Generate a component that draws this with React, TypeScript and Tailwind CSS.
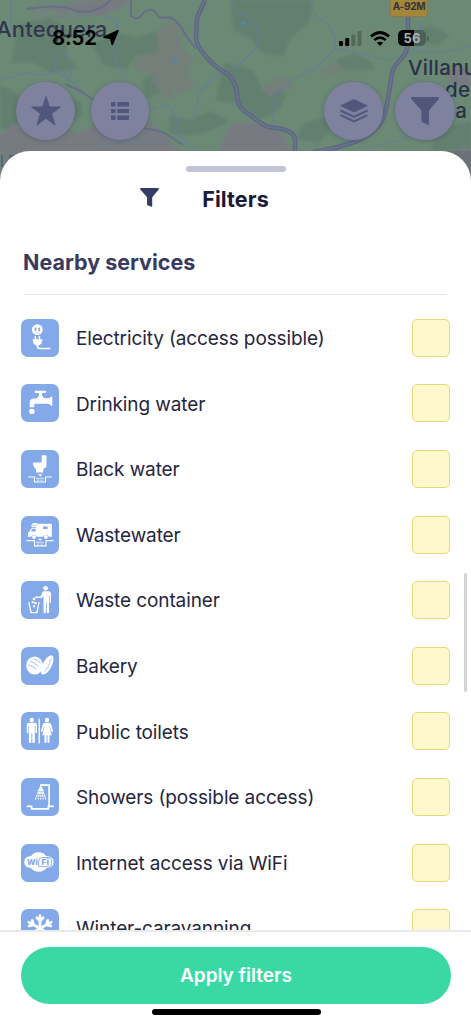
import type { ReactNode } from "react";

const FONT = "font-[Inter,'Liberation_Sans',sans-serif]";

interface Service {
  label: string;
  icon: ReactNode;
}

const services: Service[] = [
  { label: "Electricity (access possible)", icon: <ElectricityIcon /> },
  { label: "Drinking water", icon: <TapIcon /> },
  { label: "Black water", icon: <BlackWaterIcon /> },
  { label: "Wastewater", icon: <WastewaterIcon /> },
  { label: "Waste container", icon: <WasteIcon /> },
  { label: "Bakery", icon: <BakeryIcon /> },
  { label: "Public toilets", icon: <ToiletsIcon /> },
  { label: "Showers (possible access)", icon: <ShowerIcon /> },
  { label: "Internet access via WiFi", icon: <WifiLogoIcon /> },
  { label: "Winter-caravanning", icon: <SnowIcon /> },
];

function Glyph({ children }: { children: ReactNode }) {
  return (
    <svg viewBox="0 0 38 38" className="h-full w-full" fill="#fff">
      {children}
    </svg>
  );
}

function ElectricityIcon() {
  return (
    <Glyph>
      <circle cx="16.3" cy="10.6" r="5.4" />
      <g fill="#84a9e8">
        <rect x="13.6" y="8.6" width="1.7" height="3.6" rx=".8" />
        <rect x="17.3" y="8.6" width="1.7" height="3.6" rx=".8" />
        <circle cx="16.3" cy="13.9" r=".7" />
      </g>
      <path d="M13.6 17h1.5v3.2h2.6V17h1.5v3.2h2.2v1.6h-.7v2.4l-2.6 2.4h-3.2l-2.6-2.4v-2.4h-.7v-1.6h2z" />
      <path d="M16.5 26v1.6q0 2 2 2h11" fill="none" stroke="#fff" strokeWidth="1.5" />
    </Glyph>
  );
}

function TapIcon() {
  return (
    <Glyph>
      <path d="M14.5 6.8h9.8q.8 0 .8 1.1t-.8 1.1H21v2.6l2.4 2.6h3.4q2.4-.3 3.5-1.8h1v9.3h-1q-1.1-1.7-3.5-2H14.6q-1.4 0-1.4 1.4v2.2H8.7v-4.4q0-4.3 4.3-4.5h2.7l2.3-2.6V9h-3.5q-.8 0-.8-1.1t.8-1.1z" />
      <circle cx="10.9" cy="27.4" r="2.7" />
    </Glyph>
  );
}

function BlackWaterIcon() {
  return (
    <Glyph>
      <path d="M20.7 5.7q0-.5.5-.5H25q.5 0 .5.5V17q-1.700 1.200-3.300 2v3.600H15v-3q-2.400-1.700-3-5.500v-1.500h8.700z" />
      <path d="M17 24.2h4.500l-2.200 2.300z" />
      <path d="M7.3 27h6.200v5h11v-5h6.200" fill="none" stroke="#fff" strokeWidth="1.1" />
      <path d="M15 28.4q1.200-.6 2.200 0t2.200 0 2.200 0 1.500 0M16 30.2h2m1.500 0h2" fill="none" stroke="#fff" strokeWidth=".8" />
    </Glyph>
  );
}

function WastewaterIcon() {
  return (
    <Glyph>
      <path d="M10.3 9.5q.2-2.500 2.500-2.500h3v.7h14q1.100 0 1.100 1v12.100h-3.300a2.800 2.800 0 0 0-5.400 0h-6.500a2.800 2.800 0 0 0-5.400 0H6.900v-3.400q0-1.500 1.500-2l2.600-3.700h4.200V11h-3.900q-1 0-1-1.500z" />
      <circle cx="13" cy="21" r="1.9" />
      <circle cx="24.9" cy="21" r="1.9" />
      <path d="M11.7 12.8h2.900v2.800H9.900zM22 10.500h4.600v2.400H22z" fill="#84a9e8" />
      <path d="M10.7 9.3h6" stroke="#84a9e8" strokeWidth=".6" />
      <path d="M16.8 22.700h4.500L19 25z" />
      <path d="M5.5 24.6h8v5.300H25v-5.300h7.500" fill="none" stroke="#fff" strokeWidth="1.1" />
      <path d="M15 26.3q1.200-.6 2.200 0t2.200 0 2.200 0 1.500 0M16 28h2m1.500 0h2" fill="none" stroke="#fff" strokeWidth=".8" />
    </Glyph>
  );
}

function WasteIcon() {
  return (
    <Glyph>
      <circle cx="24.6" cy="7.3" r="2.300" />
      <path d="M22.5 10.2h5q2.500 0 2.500 2.600v8.300q0 .8-.7.800t-.7-.8v-7h-.5V31q0 1.200-1.200 1.200T25.700 31v-9.600h-.8V31q0 1.200-1.200 1.200T22.500 31V15.300l-2 1.800h-5.700q-.9 0-.9-.8t.9-.8h4.900l1.700-4.300q.4-1 1.100-1z" />
      <path d="M7.8 21.200 10 31.600h6l2-10.400" fill="none" stroke="#fff" strokeWidth="1.3" />
      <rect x="11.8" y="16.800" width="2.500" height="2.200" transform="rotate(15 13 18)" />
      <rect x="10.6" y="20.200" width="2" height="2.300" transform="rotate(-20 11 21)" />
      <rect x="13.6" y="20.700" width="2.200" height="2.400" transform="rotate(20 14 21)" />
      <rect x="12" y="24.200" width="2" height="2" />
    </Glyph>
  );
}

function BakeryIcon() {
  return (
    <Glyph>
      <ellipse cx="13.6" cy="18.6" rx="8.4" ry="9" />
      <path d="M20.300 26.500c-.6-4 .6-9 3.200-12.800 2.100-3.100 5.700-5.700 7.500-5.300 2 .5 1.900 4.700.5 8.600-1.400 4.100-4.200 8.500-7.500 10-1.800.8-3.300.6-3.700-.5z" />
      <path
        d="M9.2 14.500q4.500.4 8 4.700M7.600 18q4.200.6 7.400 4.400M12.700 12q4 .8 6.600 4M30.400 12.200q-.7 2-2.400 2.300M29.200 15.700q-.7 2-2.400 2.300M27.400 19.300q-.7 2-2.400 2.300M25.300 22.500q-.7 1.500-2 1.800"
        fill="none"
        stroke="#84a9e8"
        strokeWidth=".8"
      />
    </Glyph>
  );
}

function ToiletsIcon() {
  return (
    <Glyph>
      <circle cx="10.8" cy="7.9" r="2.200" />
      <path d="M8 10.800h5.600q2.400 0 2.400 2.500v7q0 .9-.8.900t-.8-.9v-6.400h-.6v16q0 1.200-1.200 1.200t-1.300-1.200v-8.700h-.9v8.700q0 1.200-1.200 1.200T7.900 29.900v-16h-.6v6.400q0 .9-.8.900t-.8-.9v-7q0-2.500 2.300-2.500z" />
      <rect x="17.600" y="6.600" width="1.300" height="24.800" />
      <circle cx="26" cy="7.900" r="2.200" />
      <path d="M24 10.800h4q1.700 0 2.200 1.700l1.800 6.300q.2.900-.5 1.100t-1-.6l-1.600-5.100h-.5l2.500 9h-2.400v6.900q0 1-1 1t-1-1v-6.900h-1v6.900q0 1-1 1t-1-1v-6.900h-2.400l2.500-9h-.5l-1.600 5.100q-.3.800-1 .6t-.5-1.100l1.800-6.300q.5-1.700 2.200-1.700z" />
    </Glyph>
  );
}

function ShowerIcon() {
  return (
    <Glyph>
      <path d="M5.800 28.300h4.800v2.600h16.800v-2.600h5.300" fill="none" stroke="#fff" strokeWidth="1.700" />
      <path d="M28.100 29V7.100h-8.300v3" fill="none" stroke="#fff" strokeWidth="1.600" />
      <path d="M18.600 9.200h2.400l2 3.800h-6.400z" />
      <path
        d="m17.500 13.500-3.200 8M18.700 13.500l-1.600 8M19.800 13.500v8.200M20.900 13.500l1.600 8M22.100 13.500l2.800 8"
        stroke="#fff"
        strokeWidth="1.100"
        strokeDasharray="2.600 .6"
      />
    </Glyph>
  );
}

function WifiLogoIcon() {
  return (
    <Glyph>
      <path d="M10 12.200c1.700-2.700 4.200-4 7.600-4s6 1.300 7.700 4c4.400 0 7.400 2 7.400 5.900s-3 5.900-7.400 5.900c-1.700 2.500-4.200 3.700-7.600 3.700S11.700 26.500 10 24c-4 0-6.700-2-6.700-5.900s2.700-5.900 6.700-5.900z" />
      <path d="M21 13.500h6.700q2.900 0 2.900 2.900v3.300q0 2.900-2.900 2.900h-10V17q0-3.500 3.300-3.500z" fill="none" stroke="#84a9e8" strokeWidth=".9" />
      <g fill="#84a9e8" className="font-['Inter'] text-[8px] font-extrabold">
        <text x="5.900" y="20.800" textLength="10.800" lengthAdjust="spacingAndGlyphs">
          Wi
        </text>
        <text x="20.300" y="20.800" textLength="7.800" lengthAdjust="spacingAndGlyphs">
          Fi
        </text>
      </g>
    </Glyph>
  );
}

function SnowIcon() {
  const arms = [0, 60, 120, 180, 240, 300];
  return (
    <Glyph>
      {arms.map((deg) => (
        <path
          key={deg}
          d="M19 19.500V6.700M15.800 8.800 19 12l3.200-3.200"
          transform={`rotate(${deg} 19 19.500)`}
          fill="none"
          stroke="#fff"
          strokeWidth="2.700"
          strokeLinecap="round"
        />
      ))}
    </Glyph>
  );
}

function FunnelIcon({ className }: { className?: string }) {
  return (
    <svg viewBox="0 0 28 28" className={className} fill="currentColor">
      <path d="M.8 0h26.400q1.200 1 .3 2.200L18 13.500V27q-.2 1-1.300.7l-5.500-2.400q-.8-.5-.8-1.400V13.500L.5 2.200Q-.4 1 .8 0z" />
    </svg>
  );
}

const HIGHWAY_WEST = "M205 0l-8 18-1 20q0 8 14 23 8 8 16 12 8 4 11 20 0 12 6 17l18 13q6 5 16 5 15 2 18 10v40";
const HIGHWAY_EAST = "M408 16v25q0 12-8 19-9 9-9 20-3 20-6 34-5 15-22 24-14 8-50 14";

function MapBackground() {
  return (
    <svg viewBox="0 0 471 200" className="absolute top-0 left-0 h-[200px] w-[471px]" fill="none">
      <rect width="471" height="200" fill="#6c8976" />
      {/* Terrain */}
      <g className="blur-[1.5px]">
        <g fill="#627f6f">
          <path d="M18 25l30-8 24 14-7 22 12 15-25 5-22-12-18 2zM92 45l24-12 20 5 18-6 13 12-14 10-20 3-6 12-22-3zM231 0h82l-4 22-18 15-8 19-19-2-15-17-16-7zM225 62l28 9 9 18 25 4-8 17-19 9-25-16-19-3zM337 60l17-6 14 6 8 9-35 2zM142 80l15-8 8 8-4 13-14 4zM170 116l22 4 18-9 18 10-16 9-25 6-18-3zM440 128l31-6v29h-40zM305 123l18-5 10 9-14 16-23-4zM0 85l16 8 9 21-15 17-10-4zM66 98l15 5 1 14-14 4zM400 35l30-9 20 9-12 10-24-4z" />
        </g>
        <path
          d="M157 30l12-8 10 3 4 25 10 7-5 15 6 12-14 11-14-14-18-8-14-5 4-14 20-1zM156 75l13 4 6 20-12-3-12-16zM265 85l14-8 10 4 7 6-15 3-11 7-8-7zM318 70l14-6 16 4-16 6z"
          fill="#747f7a"
        />
        <path
          d="M26 8L96 0h37l-28 15-51 3zM28 140l20-12 28 4 26-8 46-3 17 14 12 14 22 8v45H0v-55zM0 134l14-10 18 8-8 20H0zM231 124l26-2 27 12 8 20h-76zM443 71l17-4 11 4v16l-19-2zM451 155l12-8 8 3v9h-20z"
          fill="#777b81"
        />
        <path d="M29 12l13-4 23 5 12-4-1 8-20-3-16 7z" fill="#71867a" />
      </g>
      {/* Rivers */}
      <g stroke="#647f93" strokeWidth="1.200" strokeLinejoin="round">
        <path d="M11 0v30M0 79c18 0 20-9 35-5 18 5 12-5 25-2l12 10 18 16M58 51l-4 17 12 10M65 52l7 15-3 14M105 15l12 7-3 33 10 23M231 0l8 14q20 6 20 20l-1 12-18 18-25 13-16 16-5 25M309 0l8 17q14 6 18 22v10l-18 18-26 13-15 15-4 28M421 20l-3 30M150 110l18-5 11 15-5 10 20 20M102 134v11l35-4h24" />
        <path d="M335 49l24 4 28 7 27-9 30 2 27-8M370 148l30-8 28-24 10-22" />
      </g>
      <circle cx="175" cy="60" r="2.500" fill="#5b82a6" />
      <circle cx="243" cy="23" r="2.500" fill="#5b82a6" />
      {/* Roads */}
      <g stroke="#666f88" strokeWidth="2" strokeLinejoin="round">
        <path d="M26 9q35-6 50 2 20 4 35-11M131 0v15q6 8 12-2 7-6 13-1 1 8 12 5 10 2 18 19l10 13M65 84l17 8 14 10 32 23 35 7 20 13" />
      </g>
      <g stroke="#5c6680" strokeWidth="4.500" strokeLinejoin="round">
        <path d={HIGHWAY_WEST} />
        <path d={HIGHWAY_EAST} />
      </g>
      <g stroke="#69728d" strokeWidth="2.200" strokeLinejoin="round">
        <path d={HIGHWAY_WEST} />
        <path d={HIGHWAY_EAST} />
      </g>
      <path d="M2 155v12M9 156h9M13 156v11" stroke="#42666d" strokeWidth="1.500" />
      <path d="M447 151h24v49h-24z" fill="#6c7079" />
    </svg>
  );
}

function MapButton({ children, className }: { children: ReactNode; className: string }) {
  return (
    <button
      className={`flex h-[58px] shrink-0 items-center justify-center rounded-full bg-[#7e829e] text-[#51567b] shadow-[0_1px_5px_rgba(50,55,80,0.35)] ${className}`}
    >
      {children}
    </button>
  );
}

function StatusBar() {
  return (
    <div className="relative flex h-[76px] items-center pl-[52px] text-black">
      <span className="text-[20px] leading-none font-bold tracking-[-0.1px]">8:52</span>
      <svg viewBox="0 0 16 16" className="ml-1.5 size-4" fill="currentColor">
        <path
          d="M15 .8 9.300 14.500 7.700 8.500 1 7.200z"
          stroke="currentColor"
          strokeWidth="1.600"
          strokeLinejoin="round"
        />
      </svg>
      <div className="ml-auto flex items-center pr-[42px]">
        <svg viewBox="0 0 23 15" className="h-[15px] w-[23px]" fill="currentColor">
          <rect y="10" width="4" height="5" rx="1" />
          <rect x="6.200" y="7" width="4" height="8" rx="1" />
          <g opacity=".22">
            <rect x="12.400" y="3.500" width="4" height="11.500" rx="1" />
            <rect x="18.600" width="4" height="15" rx="1" />
          </g>
        </svg>
        <svg viewBox="0 0 20 15" className="ml-2 h-[15px] w-5" fill="none" stroke="currentColor" strokeWidth="2.700">
          <path d="M1 5.500q9-8 18 0M4.300 9q5.700-4.600 11.400 0" />
          <path d="m10 15-3.200-3.200q3.200-2.300 6.400 0z" fill="currentColor" stroke="none" />
        </svg>
        <div className="ml-2 flex h-4 w-7 items-center justify-center rounded-[5px] bg-[linear-gradient(90deg,#050807_56%,#4c5f58_56%)] text-[13px] leading-none font-bold text-[#a9b2b3]">
          56
        </div>
        <div className="ml-px h-[5px] w-[2px] rounded-r-full bg-[#4c5f58]" />
      </div>
    </div>
  );
}

export default function App() {
  return (
    <div className={`relative flex h-[1024px] w-[471px] flex-col overflow-hidden bg-white ${FONT}`}>
      <MapBackground />

      {/* Map labels */}
      <span className="absolute top-[16px] -left-1 text-[22px] leading-[26px] font-medium tracking-[0.2px] text-[#30374d]">
        Antequera
      </span>
      <span className="absolute top-0 left-[390px] flex h-[17px] w-[38px] items-center justify-center rounded-b-[3px] border border-t-0 border-[#8a7a4b] bg-[#a38639] pb-[3px] text-[10px] font-bold tracking-[-0.3px] text-[#303340]">
        A-92M
      </span>
      <div className="absolute top-[57px] left-[408px] w-[90px] text-[20.500px] leading-[21.500px] font-medium tracking-[0.3px] text-[#2b3148]">
        <p>Villanu</p>
        <p className="pl-[37px]">del</p>
        <p className="pl-[36px]">sa</p>
      </div>

      <div className="relative h-[151px] shrink-0">
        <StatusBar />
        <div className="flex px-4 pt-[6px]">
          <MapButton className="w-[59px]">
            <svg viewBox="0 0 30 30" className="size-[30px]" fill="currentColor">
              <path d="M15 .5 18.500 10.900 29.500 11 20.700 17.600 24 29 15 22.300 6 29 9.300 17.600.5 11l11-.1z" stroke="currentColor" strokeLinejoin="round" strokeWidth=".8" />
            </svg>
          </MapButton>
          <MapButton className="ml-4 w-[58px]">
            <svg viewBox="0 0 18 18" className="size-[18px]" fill="currentColor">
              <path d="M1 0h2.500q1 0 1 1v3.500H1q-1 0-1-1V1q0-1 1-1zM6.300 0H17q1 0 1 1v2.500q0 1-1 1H6.300zM0 6.900h4.500v4.200H0zM6.300 6.900H18v4.200H6.300zM0 13.500h4.500V18H1q-1 0-1-1zM6.300 13.500H18V17q0 1-1 1H6.300z" />
            </svg>
          </MapButton>
          <MapButton className="ml-auto w-[59px]">
            <svg viewBox="0 0 28 24" className="h-6 w-7" fill="currentColor">
              <path d="M14 0 28 6.700 14 13.500 0 6.700z" />
              <path d="m.5 11.500 13.500 6.300 13.500-6.300M.5 16.200 14 22.500l13.500-6.300" fill="none" stroke="currentColor" strokeWidth="2" />
            </svg>
          </MapButton>
          <MapButton className="ml-3 w-[60px]">
            <FunnelIcon className="size-7" />
          </MapButton>
        </div>
      </div>

      {/* Bottom sheet */}
      <div className="relative flex min-h-0 flex-1 flex-col rounded-t-[30px] bg-white">
        <div className="mx-auto mt-[15px] h-[6px] w-[100px] shrink-0 rounded-full bg-[#c4c4d9]" />
        <header className="grid h-[54px] shrink-0 grid-cols-3 items-center text-center">
          <FunnelIcon className="mr-[-2px] mb-[3px] ml-auto size-[19px] text-[#353b63]" />
          <h1 className="text-[21.500px] font-bold tracking-[0.1px] text-[#1b1a38]">Filters</h1>
        </header>

        <h2 className="mx-[24px] flex h-[69px] shrink-0 items-center border-b border-[#e6e7ea] pt-1 text-[21.500px] font-bold text-[#393a60]">
          <span className="-ml-px">Nearby services</span>
        </h2>

        <div className="min-h-0 flex-1 overflow-hidden pt-[10px]">
          <ul>
            {services.map((service) => (
              <li key={service.label} className="flex h-[65.600px] items-center px-[21px]">
                <div className="size-[38px] shrink-0 overflow-hidden rounded-[7px] bg-[#84a9e8]">{service.icon}</div>
                <span className="ml-[17px] pt-[3px] text-[19px] tracking-[-0.110px] text-[#25253f]">
                  {service.label}
                </span>
                <span className="ml-auto size-[38px] shrink-0 rounded-[5px] border border-[#ecd67c] bg-[#fef8cd]" />
              </li>
            ))}
          </ul>
        </div>

        {/* Scroll indicator */}
        <div className="absolute top-[422px] right-1 h-[119px] w-[3px] rounded-full bg-[#d3d3d3]" />

        <footer className="h-[94px] shrink-0 border-t-2 border-[#e9eaec] pt-[15px] pr-5 pl-[21px]">
          <button className="h-[57px] w-full rounded-full bg-[#3ad9a3] pt-0.5 text-[19px] font-semibold text-white">
            Apply filters
          </button>
          <div className="mx-auto mt-[5px] h-[6px] w-[169px] rounded-full bg-black" />
        </footer>
      </div>
    </div>
  );
}
